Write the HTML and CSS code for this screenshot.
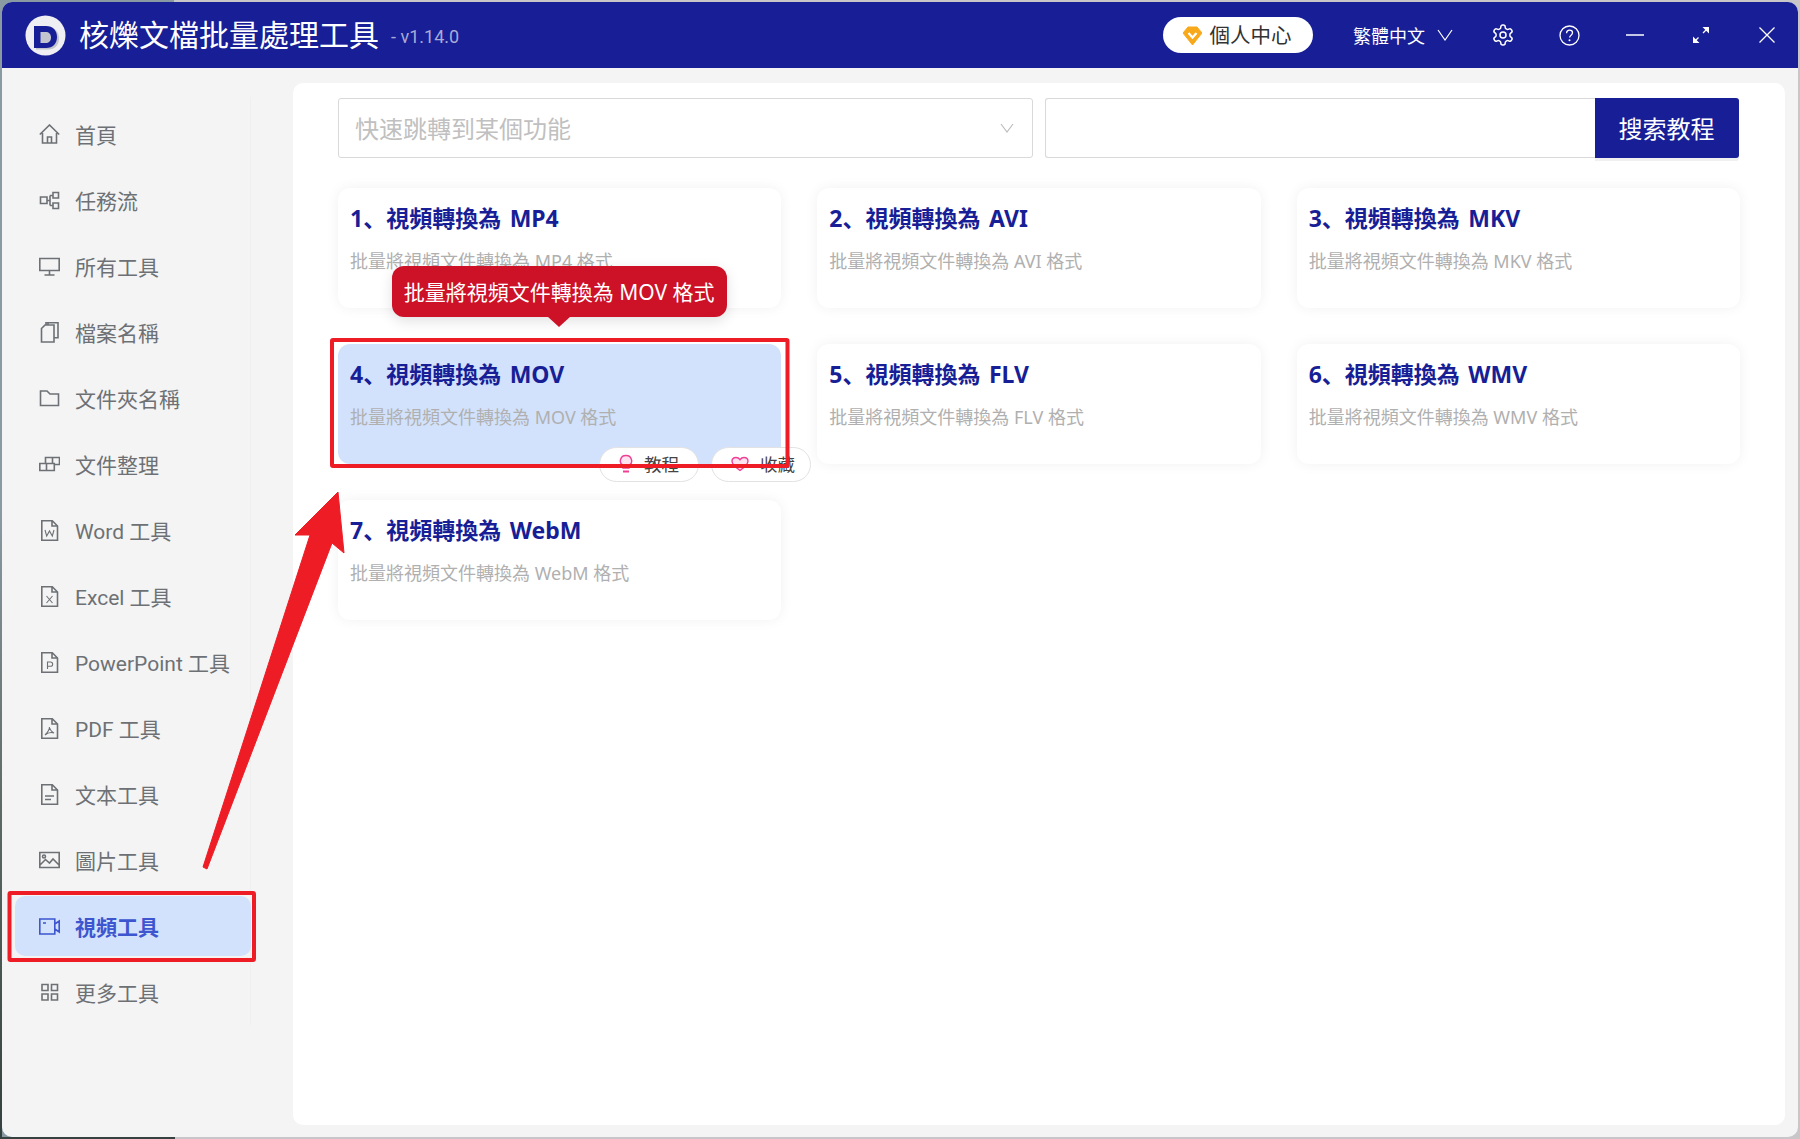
FILE: index.html
```html
<!DOCTYPE html>
<html lang="zh-Hant">
<head>
<meta charset="utf-8">
<title>核爍文檔批量處理工具</title>
<link rel="stylesheet" href="styles.css">
</head>
<body>
<div class="window">
  <header class="titlebar">
    <svg class="logo" viewBox="0 0 41 41" width="41" height="41"><circle cx="20.500" cy="20.500" r="20" fill="#efeff3"/><path d="M11 12.500h12c7 0 11 4.500 11 11s-4 11-11 11H11z" fill="#c4c4ce"/><path fill-rule="evenodd" d="M9 11h12c7 0 11 4.500 11 11s-4 11-11 11H9zM15.500 17v11h5c3.500 0 5.500-2 5.500-5.500S24 17 20.500 17z" fill="#171e96"/></svg>
    <h1 class="app-name">核爍文檔批量處理工具</h1>
    <span class="version">- v1.14.0</span>
    <div class="spacer"></div>
    <a class="vip"><svg viewBox="0 0 19 19" width="19" height="19"><path d="M5 1h9l5 6-9.500 12L0 7z" fill="#f8a91b" stroke="#f8a91b" stroke-linejoin="round"/><path d="M5.500 7l4 4.500 4-4.500" fill="none" stroke="#fff" stroke-width="2.200"/></svg><span>個人中心</span></a>
    <a class="lang">繁體中文<svg viewBox="0 0 16 12" width="16" height="12"><path d="M1 1l7 10 7-10" fill="none" stroke="#fff" stroke-width="1.200"/></svg></a>
    <div class="winbtns">
      <span class="winbtn"><svg viewBox="0 0 24 24" width="24" height="24" fill="none" stroke="#fff" stroke-width="1.500"><path d="M12.220 2h-.44a2 2 0 0 0-2 2v.18a2 2 0 0 1-1 1.730l-.43.250a2 2 0 0 1-2 0l-.15-.08a2 2 0 0 0-2.730.730l-.22.380a2 2 0 0 0 .730 2.730l.15.100a2 2 0 0 1 1 1.720v.510a2 2 0 0 1-1 1.740l-.15.090a2 2 0 0 0-.730 2.730l.22.380a2 2 0 0 0 2.730.730l.15-.08a2 2 0 0 1 2 0l.43.250a2 2 0 0 1 1 1.730V20a2 2 0 0 0 2 2h.44a2 2 0 0 0 2-2v-.18a2 2 0 0 1 1-1.730l.43-.25a2 2 0 0 1 2 0l.15.080a2 2 0 0 0 2.730-.73l.22-.39a2 2 0 0 0-.73-2.730l-.15-.08a2 2 0 0 1-1-1.740v-.5a2 2 0 0 1 1-1.740l.15-.09a2 2 0 0 0 .730-2.730l-.22-.38a2 2 0 0 0-2.730-.73l-.15.080a2 2 0 0 1-2 0l-.43-.25a2 2 0 0 1-1-1.730V4a2 2 0 0 0-2-2z"/><circle cx="12" cy="12" r="3"/></svg></span>
      <span class="winbtn"><svg viewBox="0 0 21 21" width="21" height="21"><circle cx="10.500" cy="10.500" r="9.500" fill="none" stroke="#fff" stroke-width="1.300"/><path d="M7.600 8.200c0-1.800 1.300-3 3-3s2.900 1.100 2.900 2.600c0 2.300-2.900 2.400-2.900 4.700" fill="none" stroke="#fff" stroke-width="1.300"/><circle cx="10.500" cy="15.300" r="1" fill="#fff"/></svg></span>
      <span class="winbtn"><svg viewBox="0 0 18 4" width="18" height="4"><path d="M0 2h18" stroke="#fff" stroke-width="1.500"/></svg></span>
      <span class="winbtn"><svg viewBox="0 0 18 18" width="18" height="18"><path d="M11 7l5-5M6.500 11.500l-5 5" stroke="#fff" stroke-width="1.300"/><path d="M10.500 1h6.500v6.500zM7.500 17H1v-6.500z" fill="#fff"/></svg></span>
      <span class="winbtn"><svg viewBox="0 0 16 16" width="16" height="16"><path d="M.5.500l15 15M15.500.500l-15 15" stroke="#fff" stroke-width="1.300"/></svg></span>
    </div>
  </header>
  <div class="body">
    <nav class="sidebar">
      <a class="nav-item"><svg class="ni" viewBox="0 0 21 21"><path d="M.8 10.500L10.500 1l9.700 9.500M3.500 9v10h14V9M8.500 19v-6h4v6"/></svg><span>首頁</span></a>
      <a class="nav-item"><svg class="ni" viewBox="0 0 21 21"><path d="M1.500 7H8v6.500H1.500zM14 2.500h5.500V8H14zM14 13h5.500v5.500H14zM8 10.500h3M11 5.500h3M11 15.500h3M11 5.500v10"/></svg><span>任務流</span></a>
      <a class="nav-item"><svg class="ni" viewBox="0 0 21 21"><path d="M.8 2.500h19.400v12H.8zM10.500 14.500V19M5.500 19h10"/></svg><span>所有工具</span></a>
      <a class="nav-item"><svg class="ni" viewBox="0 0 21 21"><path d="M2.500 6.500L6 3h9v17H2.500zM7 3V.8h12v15h-4M9 3V.8"/></svg><span>檔案名稱</span></a>
      <a class="nav-item"><svg class="ni" viewBox="0 0 21 21"><path d="M1.500 17.500V3H8l3 3h8.500v11.500z"/></svg><span>文件夾名稱</span></a>
      <a class="nav-item"><svg class="ni" viewBox="0 0 21 21"><path d="M6.500 9.500v-6h14v7h-5M.8 9.500h14.500v7H.8zM7.500 9.500v7M13.500 3.500v6"/></svg><span>文件整理</span></a>
      <a class="nav-item"><svg class="ni" viewBox="0 0 21 21"><path d="M2.800.8h10.500L18.500 6v14.200H2.800zM13 .8V6h5.500"/><path class="thin" d="M6 10l1.700 6 2.800-5 2.800 5 1.700-6"/></svg><span>Word 工具</span></a>
      <a class="nav-item"><svg class="ni" viewBox="0 0 21 21"><path d="M2.800.8h10.500L18.500 6v14.200H2.800zM13 .8V6h5.500"/><path class="thin" d="M7.500 10l6 7M13.500 10l-6 7"/></svg><span>Excel 工具</span></a>
      <a class="nav-item"><svg class="ni" viewBox="0 0 21 21"><path d="M2.800.8h10.500L18.500 6v14.200H2.800zM13 .8V6h5.500"/><path class="thin" d="M8.500 17v-7h3a2 2 0 010 4.300h-3"/></svg><span>PowerPoint 工具</span></a>
      <a class="nav-item"><svg class="ni" viewBox="0 0 21 21"><path d="M2.800.8h10.500L18.500 6v14.200H2.800zM13 .8V6h5.500"/><path class="thin" d="M10.500 9c0 3-2.500 6-4.500 8 3-2.500 6-3 9-2-2-1-4-3-4.500-6z"/></svg><span>PDF 工具</span></a>
      <a class="nav-item"><svg class="ni" viewBox="0 0 21 21"><path d="M2.800.8h10.500L18.500 6v14.200H2.800zM13 .8V6h5.500M6 12h9M6 15.500h6"/></svg><span>文本工具</span></a>
      <a class="nav-item"><svg class="ni" viewBox="0 0 21 21"><path d="M.8 2.500h19.400v15H.8zM1 15l5.500-5.500 4 3.500 3.500-4 6 6"/><circle cx="5" cy="6.500" r="1.500"/></svg><span>圖片工具</span></a>
      <a class="nav-item active"><svg class="ni" viewBox="0 0 21 21"><path d="M.8 3h15v15H.8zM15.800 8l4.400-3v11l-4.400-3M4 7h3"/></svg><span>視頻工具</span></a>
      <a class="nav-item"><svg class="ni" viewBox="0 0 21 21"><path d="M3 2.500h6v6H3zM12.500 2.500h6v6h-6zM3 12h6v6H3zM12.500 12h6v6h-6z"/></svg><span>更多工具</span></a>
    </nav>
    <main class="panel">
      <div class="searchrow">
        <div class="select"><span>快速跳轉到某個功能</span><svg viewBox="0 0 14 10" width="14" height="10"><path d="M1 1l6 8 6-8" fill="none" stroke="#bdbdbd" stroke-width="1.200"/></svg></div>
        <div class="search"><div class="search-input"></div><button class="search-btn"><span>搜索教程</span></button></div>
      </div>
      <div class="grid">
        <article class="card"><h2>1、視頻轉換為 MP4</h2><p>批量將視頻文件轉換為 MP4 格式</p></article>
        <article class="card"><h2>2、視頻轉換為 AVI</h2><p>批量將視頻文件轉換為 AVI 格式</p></article>
        <article class="card"><h2>3、視頻轉換為 MKV</h2><p>批量將視頻文件轉換為 MKV 格式</p></article>
        <article class="card hover">
          <h2>4、視頻轉換為 MOV</h2><p>批量將視頻文件轉換為 MOV 格式</p>
          <div class="tooltip">批量將視頻文件轉換為 MOV 格式</div>
          <div class="chips">
            <a class="chip"><svg viewBox="0 0 14 20" width="14" height="20"><path d="M7 1.500a5.500 5.500 0 00-3 10.200V14h6v-2.300A5.500 5.500 0 007 1.500z" fill="#fde3ef" stroke="#ee3f95" stroke-width="1.400"/><path d="M4 17.500h6" stroke="#ee3f95" stroke-width="2"/></svg><span>教程</span></a>
            <a class="chip"><svg viewBox="0 0 18 16" width="18" height="16"><path d="M9 14.500C4 11 1 8.500 1 5.300 1 3 2.800 1.500 5 1.500c1.700 0 3 .8 4 2.200 1-1.400 2.300-2.200 4-2.200 2.200 0 4 1.500 4 3.800 0 3.200-3 5.700-8 9.200z" fill="#fde3ef" stroke="#ee3f95" stroke-width="1.400"/></svg><span>收藏</span></a>
          </div>
        </article>
        <article class="card"><h2>5、視頻轉換為 FLV</h2><p>批量將視頻文件轉換為 FLV 格式</p></article>
        <article class="card"><h2>6、視頻轉換為 WMV</h2><p>批量將視頻文件轉換為 WMV 格式</p></article>
        <article class="card"><h2>7、視頻轉換為 WebM</h2><p>批量將視頻文件轉換為 WebM 格式</p></article>
      </div>
    </main>
  </div>
</div>
<svg class="annotation" viewBox="0 0 1800 1139" width="1800" height="1139">
  <rect x="332" y="340" width="455.500" height="126" rx="1" fill="none" stroke="#ee1c25" stroke-width="4"/>
  <rect x="9.500" y="893" width="244.500" height="67" rx="1" fill="none" stroke="#ee1c25" stroke-width="4"/>
  <path d="M338 492L344 553 332 543 207 869 203 867 310 535 295 535z" fill="#ee1c25" stroke="#ee1c25" stroke-width="1" stroke-linejoin="round"/>
</svg>
</body>
</html>
```
FILE: styles.css
```css
* { box-sizing: border-box; }
html, body { margin: 0; padding: 0; }
body {
  width: 1800px;
  height: 1139px;
  overflow: hidden;
  position: relative;
  background:
    linear-gradient(#8a9aa3, #8a9aa3 45%, #5f6b66 70%, #33403d) left top / 2px 100% no-repeat,
    linear-gradient(#36423f, #36423f) left bottom / 175px 2px no-repeat,
    linear-gradient(90deg, #8a9aa3 0, #8a9aa3 174px, #c8c6c8 174px);
  padding: 2px;
  font-family: "Noto Sans", "Noto Sans CJK SC", sans-serif;
  font-feature-settings: "locl" 0;
}
.window {
  width: 1796px;
  height: 1135px;
  background: #f4f4f4;
  border-radius: 10px;
  overflow: hidden;
  display: flex;
  flex-direction: column;
}
.titlebar {
  height: 66px;
  background: #171e96;
  display: flex;
  align-items: center;
  color: #fff;
  padding-left: 23px;
  flex: none;
}
.logo { flex: none; }
.app-name {
  margin: 0 0 0 13px;
  font-size: 30px;
  font-weight: 400;
  line-height: 1;
  white-space: nowrap;
}
.version { margin-left: 12px; font-size: 18px; color: #a8abd6; font-family: "Roboto", sans-serif; padding-top: 3px; }
.spacer { flex: 1; }
.vip {
  width: 150px;
  height: 36px;
  background: #fff;
  border-radius: 18px;
  display: flex;
  align-items: center;
  justify-content: center;
  gap: 8px;
  color: #333;
  font-size: 20.500px;
  padding-right: 2px;
}
.vip span { padding-bottom: 2px; }
.lang {
  margin-left: 40px;
  display: flex;
  align-items: center;
  gap: 12px;
  font-size: 18px;
  white-space: nowrap;
}
.winbtns {
  display: flex;
  align-items: center;
  margin-left: 17px;
  margin-right: -2px;
}
.winbtn {
  width: 66px;
  display: flex;
  align-items: center;
  justify-content: center;
}
.body { flex: 1; display: flex; min-height: 0; }
.sidebar {
  width: 249px;
  height: 928px;
  margin: 29px 42px 0 0;
  flex: none;
  padding: 7px 0 0 13px;
  display: flex;
  flex-direction: column;
  gap: 6px;
  border-right: 1px solid #efefef;
}
.nav-item {
  width: 236px;
  height: 60px;
  display: flex;
  align-items: center;
  padding-left: 24px;
  gap: 15px;
  font-family: "Roboto", "Noto Sans CJK SC", sans-serif;
  font-size: 21px;
  color: #6d7175;
  border-radius: 10px;
  white-space: nowrap;
}
.nav-item .ni {
  width: 21px;
  height: 21px;
  flex: none;
  fill: none;
  stroke: #6d7175;
  stroke-width: 1.600;
}
.nav-item .ni .thin { stroke-width: 1.100; }
.nav-item.active { background: #d2e2fc; color: #3d55cf; font-weight: 700; }
.nav-item.active .ni { stroke: #3d55cf; }
.panel {
  width: 1492px;
  height: 1042px;
  margin-top: 15px;
  background: #fff;
  border-radius: 10px;
  padding: 15px 45px 0;
}
.searchrow { display: flex; gap: 12px; height: 60px; }
.select {
  width: 695px;
  border: 1px solid #d9d9d9;
  border-radius: 3px;
  display: flex;
  align-items: center;
  justify-content: space-between;
  padding: 0 18px 0 17px;
  color: #c0c0c0;
  font-size: 24px;
}
.select span { padding-bottom: 2px; margin-left: -1px; }
.search { flex: 1; display: flex; margin-right: 1px; }
.search-input { flex: 1; border: 1px solid #d9d9d9; border-right: 0; border-radius: 3px 0 0 3px; }
.search-btn {
  width: 144px;
  border: 0;
  background: #171e96;
  color: #fff;
  font: inherit;
  font-size: 24px;
  border-radius: 0 3px 3px 0;
  box-shadow: 0 3px 0 #f0f0f0;
  padding: 0 1px 2px 0;
}
.grid {
  margin-top: 30px;
  display: grid;
  grid-template-columns: repeat(3, 1fr);
  grid-auto-rows: 120px;
  gap: 36px;
}
.card {
  position: relative;
  background: #fff;
  border-radius: 12px;
  padding: 14px 12px 0;
  box-shadow: 0 0 14px rgba(0, 0, 0, .06);
}
.card h2 {
  margin: 0;
  font-size: 23px;
  font-weight: 700;
  line-height: 32px;
  color: #171e96;
  white-space: nowrap;
  word-spacing: 2.500px;
}
.card p {
  margin: 15px 0 0;
  font-size: 18px;
  line-height: 24px;
  color: #b0b0b0;
  white-space: nowrap;
}
.card.hover { background: #d2e2fc; box-shadow: none; }
.tooltip {
  position: absolute;
  left: 54px;
  top: -78px;
  width: 334.500px;
  height: 51px;
  background: #cd1127;
  color: #fff;
  border-radius: 12px;
  font-size: 21px;
  display: flex;
  align-items: center;
  justify-content: center;
  padding-bottom: 2px;
  white-space: nowrap;
  box-shadow: 0 4px 14px rgba(0, 0, 0, .12);
}
.tooltip::after {
  content: "";
  position: absolute;
  left: 155px;
  bottom: -10px;
  width: 24px;
  height: 11px;
  background: #cd1127;
  clip-path: polygon(0 0, 100% 0, 50% 100%);
}
.chips { position: absolute; left: 261px; top: 102.500px; display: flex; gap: 12px; }
.chip {
  width: 100px;
  height: 35px;
  background: #fff;
  border: 1px solid #e2e2e2;
  border-radius: 18px;
  display: flex;
  align-items: center;
  gap: 12px;
  padding-left: 19px;
  font-size: 17.500px;
  color: #444;
}
.chip span { padding-bottom: 1px; }
.chip svg + span { margin-left: -1px; }
.annotation { position: absolute; left: 0; top: 0; pointer-events: none; }
```
